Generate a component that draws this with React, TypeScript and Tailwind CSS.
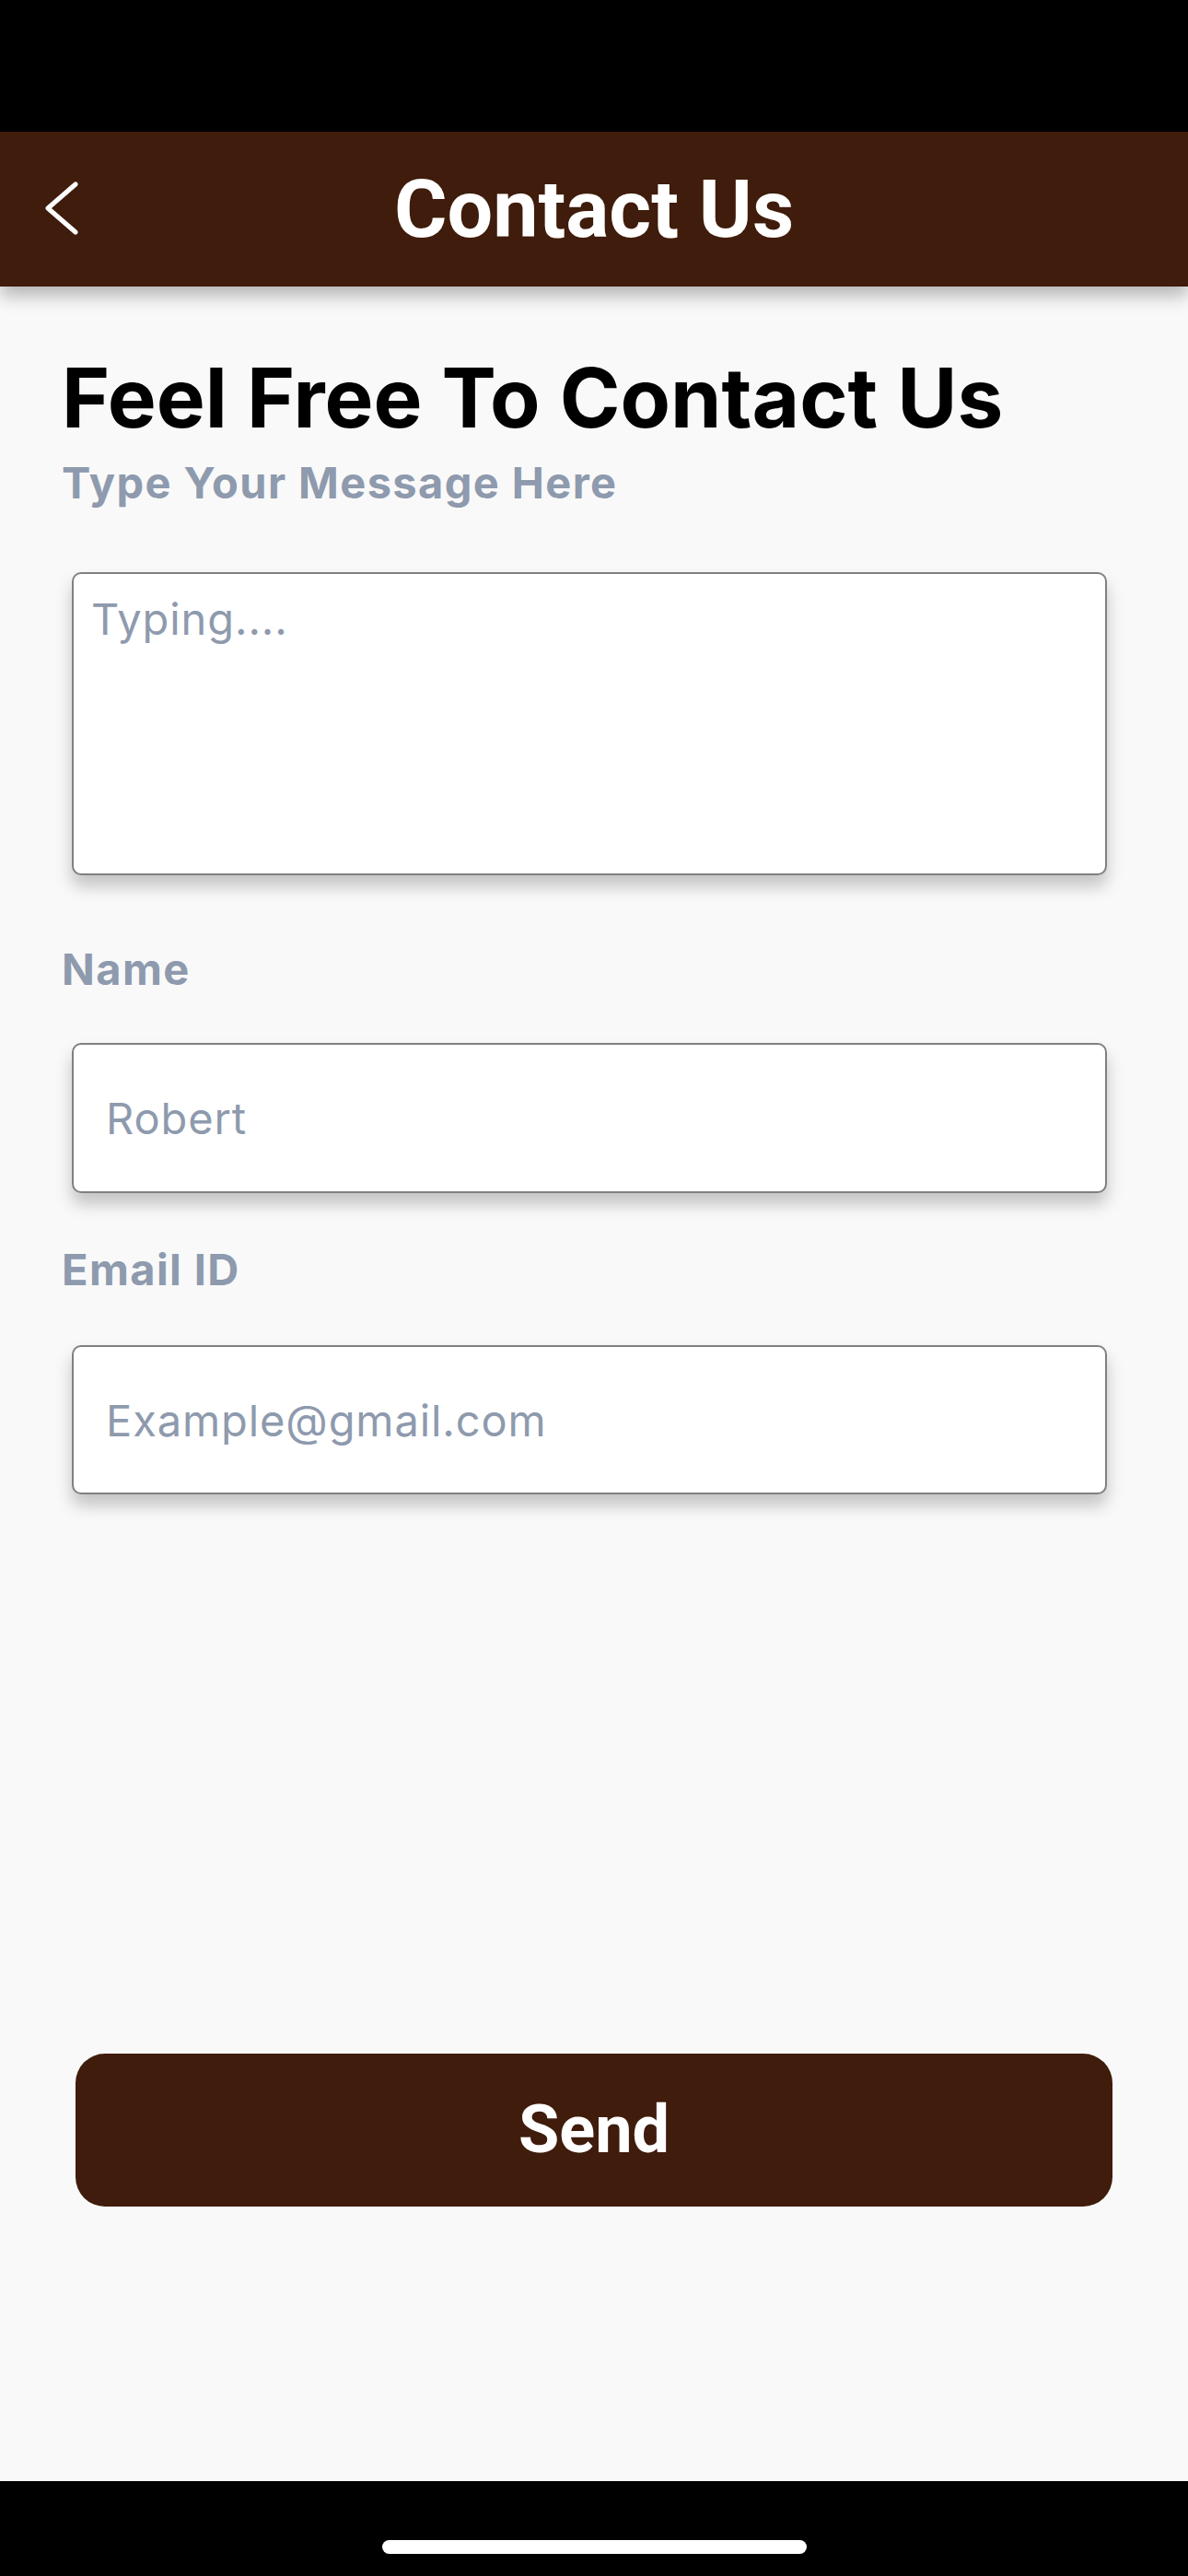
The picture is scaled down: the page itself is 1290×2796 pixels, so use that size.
import { useState } from 'react';

const labelClass =
  "block font-['Inter',sans-serif] text-[47px] leading-[46px] font-bold tracking-[1.4px] text-[#8e9aad]";

const boxClass =
  "w-full rounded-[10px] border-2 border-[#808080] bg-white shadow-[0_12px_18px_rgba(0,0,0,0.22)] font-['Inter',sans-serif] text-[47px] tracking-[0.9px] text-[#8e9aad] placeholder:text-[#8e9aad] outline-none";

export default function App() {
  const [message, setMessage] = useState('');
  const [name, setName] = useState('');
  const [email, setEmail] = useState('');

  return (
    <div className="flex h-[2796px] w-[1290px] flex-col bg-[#f9f9f9]">
      {/* status bar */}
      <div className="h-[143px] shrink-0 bg-black" />

      {/* header */}
      <header className="relative z-10 flex h-[168px] shrink-0 items-center bg-[#3f1c0b] px-[46px] shadow-[0_10px_18px_rgba(0,0,0,0.28)]">
        <button type="button" className="h-[60px] w-[44px]" aria-label="Back">
          <svg viewBox="0 0 44 60" className="h-[60px] w-[44px]" fill="none">
            <path
              d="M36 3 L6 29 L36 55"
              stroke="white"
              strokeWidth="5"
              strokeLinecap="round"
              strokeLinejoin="round"
            />
          </svg>
        </button>
        <h1 className="flex-1 text-center font-['Roboto',sans-serif] text-[88px] leading-none font-bold text-white">
          Contact Us
        </h1>
        <div className="w-[44px]" />
      </header>

      {/* content */}
      <main className="flex flex-1 flex-col px-[67px] pt-[77px]">
        <h2 className="font-['Inter',sans-serif] text-[89px] leading-[88px] font-bold text-black">
          Feel Free To Contact Us
        </h2>
        <label htmlFor="message" className={`${labelClass} mt-[25px]`}>
          Type Your Message Here
        </label>
        <div className="mt-[74px] pl-[11px] pr-[21px]">
          <textarea
            id="message"
            value={message}
            onChange={(e) => setMessage(e.target.value)}
            placeholder="Typing...."
            className={`${boxClass} h-[329px] resize-none px-[19px] pt-[22px] leading-[54px]`}
          />
        </div>

        <label htmlFor="name" className={`${labelClass} mt-[73px]`}>
          Name
        </label>
        <div className="mt-[57px] pl-[11px] pr-[21px]">
          <input
            id="name"
            type="text"
            value={name}
            onChange={(e) => setName(e.target.value)}
            placeholder="Robert"
            className={`${boxClass} h-[163px] px-[35px]`}
          />
        </div>

        <label htmlFor="email" className={`${labelClass} mt-[60px]`}>
          Email ID
        </label>
        <div className="mt-[59px] pl-[11px] pr-[21px]">
          <input
            id="email"
            type="email"
            value={email}
            onChange={(e) => setEmail(e.target.value)}
            placeholder="Example@gmail.com"
            className={`${boxClass} h-[162px] px-[35px]`}
          />
        </div>

        <div className="flex-1" />

        <div className="pb-[298px] pl-[15px] pr-[15px]">
          <button
            type="button"
            className="h-[166px] w-full rounded-[32px] bg-[#3f1c0b] font-['Roboto',sans-serif] text-[72px] font-bold text-white"
          >
            Send
          </button>
        </div>
      </main>

      {/* home indicator */}
      <div className="flex h-[103px] shrink-0 items-start justify-center bg-black pt-[64px]">
        <div className="h-[15px] w-[461px] rounded-full bg-white" />
      </div>
    </div>
  );
}
